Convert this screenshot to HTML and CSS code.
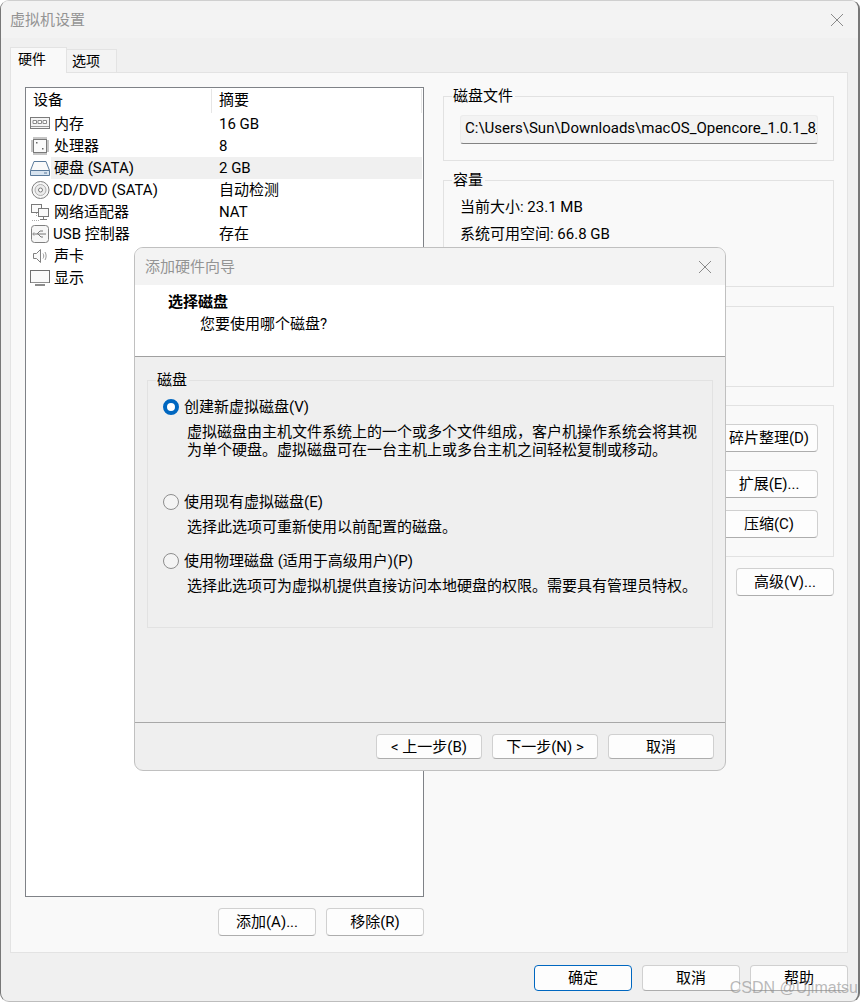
FILE: index.html
```html
<!DOCTYPE html>
<html lang="zh-CN">
<head>
<meta charset="utf-8">
<title>虚拟机设置</title>
<link rel="stylesheet" href="styles.css">
</head>
<body>
<div class="window">
  <header class="titlebar">
    <span class="title">虚拟机设置</span>
    <svg class="close" width="14" height="14" viewBox="0 0 14 14"><path d="M1 1l12 12M13 1L1 13"/></svg>
  </header>
  <div class="tabs">
    <div class="tab active">硬件</div>
    <div class="tab">选项</div>
  </div>
  <main class="panel">
    <section class="left">
      <div class="list">
        <div class="list-head">
          <div class="head-a">设备</div>
          <div class="head-b">摘要</div>
        </div>
        <div class="row">
          <svg class="ico" width="22" height="20" viewBox="0 0 22 20"><rect x="1.500" y="3.500" width="19" height="11" fill="#f4f4f4" stroke="#7a7a7a"/><path d="M4 6.500h3.500v3H4zM9 6.500h3.500v3H9zM14 6.500h3.500v3H14z" fill="#fff" stroke="#8a8a8a"/><path d="M2 12.500h18" stroke="#9a9a9a"/></svg>
          <span class="name">内存</span><span class="val">16 GB</span>
        </div>
        <div class="row">
          <svg class="ico" width="22" height="20" viewBox="0 0 22 20"><rect x="4.500" y="3.500" width="13" height="13" fill="#fafafa" stroke="#7a7a7a"/><path d="M5 1v2M7 1v2M9 1v2M11 1v2M13 1v2M15 1v2M17 1v2M5 17v2M7 17v2M9 17v2M11 17v2M13 17v2M15 17v2M17 17v2M2 5h2M2 7h2M2 9h2M2 11h2M2 13h2M2 15h2M18 5h2M18 7h2M18 9h2M18 11h2M18 13h2M18 15h2" stroke="#8c8c8c"/><path d="M7 6h1.500v1.500H7zM13 12h1.500v1.500H13z" fill="#666"/></svg>
          <span class="name">处理器</span><span class="val">8</span>
        </div>
        <div class="row selected">
          <svg class="ico" width="22" height="20" viewBox="0 0 22 20"><path d="M5 3.500h12l3.500 9v5h-19v-5z" fill="#fafafa" stroke="#5b7b9c"/><path d="M1.500 12.500h19" stroke="#5b7b9c"/><rect x="2" y="13" width="18" height="4" fill="#d7e3ef"/><path d="M15 15h3" stroke="#5b7b9c"/></svg>
          <span class="name">硬盘 (SATA)</span><span class="val">2 GB</span>
        </div>
        <div class="row">
          <svg class="ico" width="22" height="20" viewBox="0 0 22 20"><circle cx="11.500" cy="10" r="8.500" fill="#f6f6f6" stroke="#7f7f7f"/><circle cx="11.500" cy="10" r="5.500" fill="#ececec" stroke="#b0b0b0"/><circle cx="11.500" cy="10" r="2" fill="#fff" stroke="#7a7a7a"/></svg>
          <span class="name tight">CD/DVD (SATA)</span><span class="val">自动检测</span>
        </div>
        <div class="row">
          <svg class="ico" width="22" height="20" viewBox="0 0 22 20"><rect x="2.500" y="2.500" width="10" height="8" fill="#fafafa" stroke="#7a7a7a"/><rect x="9.500" y="6.500" width="10" height="8" fill="#fafafa" stroke="#7a7a7a"/><path d="M14.500 15v2M11 17.500h7" stroke="#7a7a7a"/><path d="M7.500 11v3M3 18.500h7" stroke="#aaa" stroke-dasharray="1 1"/></svg>
          <span class="name">网络适配器</span><span class="val">NAT</span>
        </div>
        <div class="row">
          <svg class="ico" width="22" height="20" viewBox="0 0 22 20"><rect x="2.500" y="1.500" width="17" height="17" rx="3" fill="#f7f7f7" stroke="#808080"/><path d="M5 10h12M8 10l3-3h3M9 10l3 3h2M5 8.500L3.800 10 5 11.500" fill="none" stroke="#777"/></svg>
          <span class="name tight">USB 控制器</span><span class="val">存在</span>
        </div>
        <div class="row">
          <svg class="ico" width="22" height="20" viewBox="0 0 22 20"><path d="M4.500 7.500h3l4-4v13l-4-4h-3z" fill="#fafafa" stroke="#808080"/><path d="M14 7.500c1 1.500 1 3.500 0 5M16 6c1.500 2.500 1.500 5.500 0 8" fill="none" stroke="#9a9a9a"/></svg>
          <span class="name">声卡</span><span class="val"></span>
        </div>
        <div class="row">
          <svg class="ico" width="22" height="20" viewBox="0 0 22 20"><rect x="1.500" y="2.500" width="19" height="12" fill="#fafafa" stroke="#707070"/><path d="M2 14.500h18" stroke="#909090"/><rect x="6" y="16" width="10" height="2" fill="#8c8c8c"/></svg>
          <span class="name">显示</span><span class="val"></span>
        </div>
      </div>
      <div class="list-actions">
        <button class="btn">添加(A)...</button>
        <button class="btn">移除(R)</button>
      </div>
    </section>
    <section class="right">
      <div class="group g-file">
        <span class="legend">磁盘文件</span>
        <div class="filebox">C:\Users\Sun\Downloads\macOS_Opencore_1.0.1_8_</div>
      </div>
      <div class="group g-cap">
        <span class="legend">容量</span>
        <p class="cap-line">当前大小: 23.1 MB</p>
        <p class="cap-line">系统可用空间: 66.8 GB</p>
      </div>
      <div class="group g-mid"></div>
      <div class="group g-tools">
        <button class="btn tool-a">碎片整理(D)</button>
        <button class="btn tool-b">扩展(E)...</button>
        <button class="btn tool-c">压缩(C)</button>
      </div>
      <div class="adv-row"><button class="btn">高级(V)...</button></div>
    </section>
  </main>
  <footer class="window-actions">
    <button class="btn primary">确定</button>
    <button class="btn">取消</button>
    <button class="btn">帮助</button>
  </footer>

  <div class="dialog">
    <header class="dialog-title">
      <span class="title">添加硬件向导</span>
      <svg class="close" width="14" height="14" viewBox="0 0 14 14"><path d="M1 1l12 12M13 1L1 13"/></svg>
    </header>
    <div class="dialog-head">
      <h1 class="step">选择磁盘</h1>
      <p class="step-sub">您要使用哪个磁盘?</p>
    </div>
    <div class="dialog-body">
      <div class="group g-disk">
        <span class="legend">磁盘</span>
        <div class="option"><span class="radio on"></span><span>创建新虚拟磁盘(V)</span></div>
        <p class="desc">虚拟磁盘由主机文件系统上的一个或多个文件组成，客户机操作系统会将其视<br>为单个硬盘。虚拟磁盘可在一台主机上或多台主机之间轻松复制或移动。</p>
        <div class="option opt-2"><span class="radio"></span><span>使用现有虚拟磁盘(E)</span></div>
        <p class="desc">选择此选项可重新使用以前配置的磁盘。</p>
        <div class="option opt-3"><span class="radio"></span><span>使用物理磁盘 (适用于高级用户)(P)</span></div>
        <p class="desc">选择此选项可为虚拟机提供直接访问本地硬盘的权限。需要具有管理员特权。</p>
      </div>
    </div>
    <footer class="dialog-foot">
      <button class="btn wide">&lt; 上一步(B)</button>
      <button class="btn wide">下一步(N) &gt;</button>
      <button class="btn wide">取消</button>
    </footer>
  </div>
  <div class="watermark">CSDN @Ujimatsu</div>
</div>
</body>
</html>
```

FILE: styles.css
```css
* { box-sizing: border-box; }
html, body { margin: 0; padding: 0; background: #fff; }
body {
  width: 860px;
  height: 1002px;
  overflow: hidden;
  font-family: Roboto, "Noto Sans CJK SC", sans-serif;
  font-size: 15px;
  line-height: 22px;
  color: #000;
}
p, h1 { margin: 0; }

.window {
  position: relative;
  width: 860px;
  height: 1002px;
  display: flex;
  flex-direction: column;
  background: #f0f0f0;
  border: 1px solid #bdbdbd;
  border-top-color: #cfcfcf;
  border-left-color: #777;
  border-right-color: #777;
  border-right-width: 2px;
  border-radius: 9px;
  overflow: hidden;
}
.titlebar {
  height: 37px;
  flex: none;
  display: flex;
  align-items: center;
  justify-content: space-between;
  padding: 0 14px 0 9px;
  background: #f3f3f3;
}
.title { color: #949494; }
.close { fill: none; stroke: #8a8a8a; stroke-width: 1; }

.tabs {
  height: 35px;
  flex: none;
  display: flex;
  align-items: flex-end;
  padding-left: 9px;
  position: relative;
  z-index: 1;
  margin-bottom: -1px;
}
.tab {
  width: 50px;
  height: 24px;
  font-size: 14px;
  line-height: 22px;
  padding-left: 5px;
  border: 1px solid #e3e3e3;
  border-left: 0;
  border-bottom: 1px solid #e3e3e3;
  background: #f3f3f3;
}
.tab.active {
  width: 57px;
  height: 26px;
  padding-left: 7px;
  line-height: 22px;
  border: 1px solid #e3e3e3;
  border-bottom: 0;
  background: #f9f9f9;
}

.panel {
  width: 838px;
  height: 881px;
  margin-left: 9px;
  flex: none;
  display: flex;
  gap: 19px;
  padding: 14px 15px 0 14px;
  background: #f9f9f9;
  border: 1px solid #e3e3e3;
}
.left { width: 399px; flex: none; }
.list {
  height: 810px;
  background: #fff;
  border: 1px solid #7f8287;
}
.list-head {
  height: 25px;
  display: flex;
  padding-top: 1px;
}
.head-a {
  width: 186px;
  padding-left: 7px;
  border-right: 1px solid #e6e6e6;
}
.head-b {
  width: 210px;
  padding-left: 7px;
  border-right: 1px solid #e6e6e6;
}
.row {
  height: 22px;
  display: flex;
  align-items: center;
}
.ico { width: 22px; height: 20px; margin-left: 3px; flex: none; }
.name { width: 168px; height: 22px; padding-left: 3px; flex: none; white-space: nowrap; }
.name.tight { padding-left: 2px; }
.val { width: 203px; height: 22px; padding-left: 0; flex: none; }
.row.selected .name, .row.selected .val { background: #f0f0f0; }

.list-actions {
  display: flex;
  justify-content: flex-end;
  gap: 10px;
  margin-top: 11px;
}

.btn {
  width: 98px;
  height: 28px;
  padding: 0;
  font: inherit;
  line-height: 22px;
  color: #000;
  background: #fdfdfd;
  border: 1px solid #d0d0d0;
  border-bottom-color: #adadad;
  border-radius: 4px;
}
.btn.primary { border-color: #0067c0; }
.btn.wide { width: 106px; height: 25px; line-height: 20px; }

.right { width: 391px; flex: none; padding-top: 9px; }
.group {
  position: relative;
  border: 1px solid #e2e2e2;
}
.legend {
  position: absolute;
  top: -12px;
  left: 8px;
  padding: 0 2px 0 1px;
  background: #f9f9f9;
}
.g-file { height: 65px; padding: 18px 15px 0 16px; margin-bottom: 19px; }
.filebox {
  height: 29px;
  padding-left: 4px;
  line-height: 24px;
  overflow: hidden;
  white-space: nowrap;
  background: #f3f3f3;
  border: 1px solid #ececec;
  border-bottom: 1px solid #838383;
  border-radius: 3px;
}
.g-cap { height: 107px; padding: 15px 0 0 16px; margin-bottom: 19px; }
.cap-line { height: 27px; line-height: 22px; }
.g-mid { height: 81px; margin-bottom: 18px; }
.g-tools {
  height: 152px;
  display: flex;
  flex-direction: column;
  align-items: flex-end;
  padding: 18px 15px 0 0;
}
.tool-b { margin-top: 18px; }
.tool-c { margin-top: 12px; }
.adv-row { display: flex; justify-content: flex-end; margin-top: 11px; }

.window-actions {
  display: flex;
  justify-content: flex-end;
  gap: 10px;
  padding: 12px 10px 0 0;
}
.window-actions .btn { height: 26px; line-height: 20px; }

.dialog {
  position: absolute;
  left: 133px;
  top: 246px;
  width: 592px;
  height: 524px;
  display: flex;
  flex-direction: column;
  background: #efefef;
  border: 1px solid #c0c0c0;
  border-radius: 9px;
  overflow: hidden;
}
.dialog-title {
  height: 37px;
  flex: none;
  display: flex;
  align-items: center;
  justify-content: space-between;
  padding: 0 13px 0 10px;
  background: #f3f3f3;
}
.dialog-head {
  height: 72px;
  flex: none;
  background: #fff;
  border-bottom: 1px solid #a0a0a0;
  padding-top: 6px;
}
.step { font-size: 15px; font-weight: 700; line-height: 22px; padding-left: 33px; }
.step-sub { padding-left: 65px; line-height: 22px; }
.dialog-body {
  flex: 1;
  padding: 23px 12px 0 12px;
  border-bottom: 1px solid #a8a8a8;
}
.g-disk { height: 248px; padding: 15px 0 0 15px; }
.g-disk .legend { background: #efefef; top: -12px; }
.option { display: flex; align-items: center; gap: 5px; height: 22px; }
.opt-2 { margin-top: 32px; }
.opt-3 { margin-top: 14px; }
.radio {
  width: 16px;
  height: 16px;
  flex: none;
  border-radius: 50%;
  background: #f4f4f4;
  border: 1px solid #8d8d8d;
}
.radio.on { background: #fff; border: 4.5px solid #0067c0; }
.desc { margin: 5px 0 0 24px; line-height: 18px; }
.dialog-foot {
  height: 47px;
  flex: none;
  display: flex;
  justify-content: flex-end;
  gap: 10px;
  padding: 11px 11px 0 0;
}

.watermark {
  position: absolute;
  right: 0;
  bottom: 3px;
  font-family: "Liberation Sans", sans-serif;
  font-size: 16px;
  line-height: 20px;
  color: rgba(140, 140, 140, 0.6);
}
```
